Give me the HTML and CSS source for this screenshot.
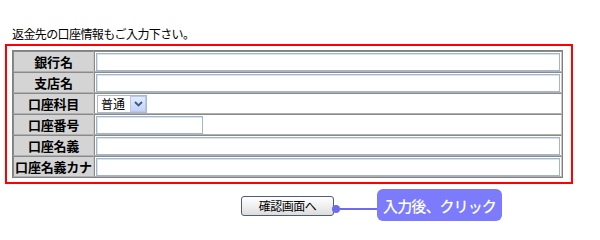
FILE: index.html
```html
<!DOCTYPE html>
<html lang="ja">
<head>
<meta charset="utf-8">
<link rel="stylesheet" href="styles.css">
</head>
<body>
<p class="intro">返金先の口座情報もご入力下さい。</p>
<div class="box">
  <table class="form">
    <tr><th>銀行名</th><td><input type="text" class="full"></td></tr>
    <tr><th>支店名</th><td><input type="text" class="full"></td></tr>
    <tr><th>口座科目</th><td><span class="sel"><select><option>普通</option><option>当座</option></select><span class="arrow"><svg width="9" height="6" viewBox="0 0 9 6"><path d="M1 1 L4.5 4.5 L8 1" fill="none" stroke="#3f5a8a" stroke-width="1.8"/></svg></span></span></td></tr>
    <tr><th>口座番号</th><td><input type="text" class="short"></td></tr>
    <tr><th>口座名義</th><td><input type="text" class="full"></td></tr>
    <tr><th>口座名義カナ</th><td><input type="text" class="full"></td></tr>
  </table>
</div>
<div class="actions">
  <button class="btn" type="button">確認画面へ</button>
  <span class="connector"></span>
  <span class="badge">入力後、クリック</span>
</div>
</body>
</html>
```
FILE: styles.css
```css
html, body {
  margin: 0;
  padding: 0;
  background: #fff;
}
body {
  padding: 0 5px;
  font-family: "Noto Sans CJK JP", "Noto Sans", sans-serif;
  color: #000;
}
.intro {
  margin: 0;
  padding: 27px 0 0 7px;
  height: 17px;
  font-size: 12px;
  line-height: 14px;
  letter-spacing: -0.6px;
}
.box {
  box-sizing: border-box;
  width: 568px;
  height: 140px;
  border: 2px solid #ff0000;
  padding: 4px 0 0 5px;
}
.form {
  border-collapse: separate;
  border-spacing: 0;
  border: 1px solid #808080;
  width: 551px;
}
.form th, .form td {
  border: 1px solid;
  border-color: #8a8a8a #c8c8c8 #b0b0b0 #8a8a8a;
  padding: 0;
  box-sizing: border-box;
  height: 21px;
}
.form th {
  width: 82px;
  background: #d4d4d4;
  font-size: 13px;
  font-weight: bold;
  line-height: 17px;
  text-align: center;
  letter-spacing: -0.2px;
  white-space: nowrap;
}
.form td {
  background: #fff;
  padding: 0 1px;
  vertical-align: middle;
}
input[type=text] {
  display: block;
  height: 18px;
  box-sizing: border-box;
  margin: 0;
  border: 1px solid #a1b5cd;
  box-shadow: inset 1px 1px 0 #dbe4ee;
  background: #fff;
  padding: 0 2px;
  font-size: 12px;
}
.full { width: 464px; }
.short { width: 107px; }
.sel {
  position: relative;
  display: flex;
  width: 50px;
  height: 18px;
  margin-left: 1px;
}
.sel select {
  display: block;
  -webkit-appearance: none;
  appearance: none;
  width: 50px;
  height: 18px;
  margin: 0;
  border: 1px solid #a9b9d0;
  background: #fff;
  padding: 0 0 0 3px;
  font-family: "Noto Sans CJK JP", sans-serif;
  font-size: 12px;
  line-height: 16px;
  color: #000;
}
.arrow {
  position: absolute;
  right: 1px;
  top: 1px;
  width: 16px;
  height: 16px;
  box-sizing: border-box;
  border: 1px solid #b8c8ec;
  background: linear-gradient(#e4ecfd, #c3d3f6);
  display: flex;
  align-items: center;
  justify-content: center;
  pointer-events: none;
}
.actions {
  display: flex;
  align-items: center;
  margin: 5px 0 0 236px;
}
.btn {
  width: 93px;
  height: 20px;
  margin: 2px 0 0;
  padding: 0;
  border: 1px solid #4e5f74;
  border-radius: 3px;
  background: linear-gradient(#ffffff, #ececec 60%, #dcdcdc);
  font-family: "Noto Sans CJK JP", sans-serif;
  font-size: 12px;
  line-height: 16px;
  color: #000;
  letter-spacing: -0.5px;
}
.connector {
  position: relative;
  width: 43px;
  height: 2px;
  margin-top: 7px;
  background: #6c6cf2;
}
.connector::before {
  content: "";
  position: absolute;
  left: -2px;
  top: -3px;
  width: 8px;
  height: 8px;
  border-radius: 50%;
  background: #6c6cf2;
}
.badge {
  display: flex;
  align-items: center;
  justify-content: center;
  width: 125px;
  height: 32px;
  border-radius: 6px;
  background: #7b7bfb;
  color: #fff;
  font-size: 15px;
  font-weight: 500;
  letter-spacing: -0.9px;
}
```
